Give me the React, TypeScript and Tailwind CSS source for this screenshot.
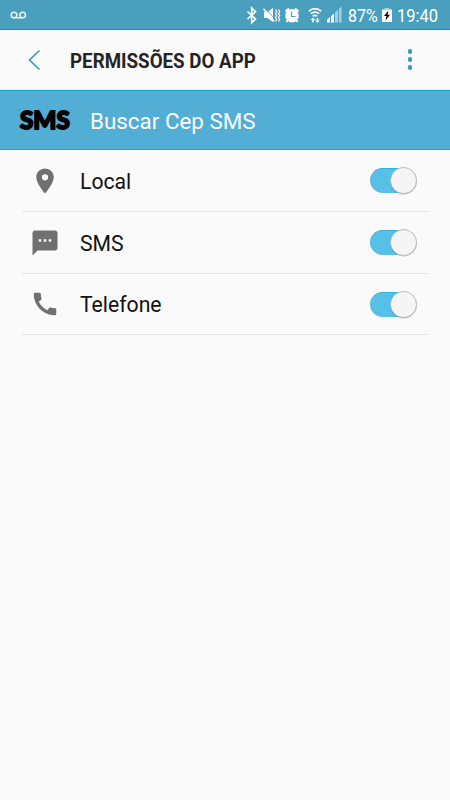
import React from 'react';

function Toggle() {
  return (
    <div role="switch" aria-checked="true" className="relative mr-[33px] mb-px h-[25px] w-[47px] shrink-0">
      <div className="h-[25px] w-[40px] rounded-full border-t border-[#2fb2dc] bg-[#57c0e6]" />
      <div className="absolute top-[-1px] right-0 size-[27px] rounded-full border border-[#bdbdbd] bg-[#f5f5f5] shadow-[0_0.5px_0.5px_rgba(0,0,0,0.25)]" />
    </div>
  );
}

function Row({ label, icon, height }: { label: string; icon: React.ReactNode; height: string }) {
  return (
    <div className={'relative flex items-center ' + height}>
      <div className="ml-[29px] flex w-8 justify-center pb-px">{icon}</div>
      <span className="ml-[19px] flex-1 pt-px text-[21.5px] leading-none text-[#111]">
        <span className="inline-block origin-left scale-x-[0.985]">{label}</span>
      </span>
      <Toggle />
      <div className="absolute right-[22px] bottom-0 left-[22px] h-px bg-[#e4e4e4]" />
    </div>
  );
}

function StatusBar() {
  return (
    <div className="flex h-[30px] items-center border-b border-[#2087ad] bg-[#4a9fbe] text-white">
      <svg className="ml-[10px]" width="17" height="8" viewBox="0 0 17 8" fill="none" stroke="#e9f5f9" strokeWidth="1.5">
        <circle cx="4" cy="4" r="2.8" />
        <circle cx="12.7" cy="4" r="2.8" />
        <path d="M4 6.8h8.7" />
      </svg>
      <svg className="ml-auto shrink-0" width="98" height="29" viewBox="245 0 98 29" fill="none" stroke="white">
        <path d="M247.5 11.5l8 7.5-3.8 3.7V8.1l3.8 3.6-8 7.5" strokeWidth="1.7" />
        <path d="M264 12h3.3l5.7-4v14l-5.7-4H264z" fill="white" stroke="none" />
        <path d="M265 8l8.5 9.5" stroke="#4a9fbe" strokeWidth="0.8" />
        <path d="M263.5 8.7l10.5 12.5" strokeWidth="1.6" />
        <path d="M275.5 9.5l1.2 2-1.2 2 1.2 2-1.2 2 1.2 2-1.2 2M278.5 9.5l1.2 2-1.2 2 1.2 2-1.2 2 1.2 2-1.2 2" strokeWidth="1.2" />
        <circle cx="292" cy="15.8" r="6.8" fill="white" stroke="none" />
        <path d="M285.5 11.5l3.5-3M298.5 11.5l-3.5-3M287.7 20.3l-1.3 1.5M296.3 20.3l1.3 1.5" strokeWidth="2" />
        <path d="M291.5 11.5v5h4" stroke="#4a9fbe" strokeWidth="1.2" />
        <path d="M308.8 11.1q6.2-5 12.4 0M310.8 13.7q4.2-3.2 8.4 0M312.8 16.1q2.2-1.5 4.4 0" strokeWidth="1.6" />
        <path d="M313 17.6l2.5 2.3h-1.7v2.4h-1.6v-2.4h-1.7zM317.5 22.7l-2.5-2.3h1.7V18h1.6v2.4h1.7z" fill="white" stroke="none" />
        <path d="M327 22.5v-2.8l3-2.7v5.5zM331 22.5v-6.3l3-2.8v9.1z" fill="white" stroke="none" />
        <path d="M335 22.5v-10l3-2.8v12.8zM339 22.5V8.8l2.5-2.3v16z" fill="#a5cfde" stroke="none" />
      </svg>
      <div className="ml-[5px] w-[31px] pt-px text-[19px] leading-none">
        <span className="inline-block origin-left scale-x-[0.84]">87%</span>
      </div>
      <svg className="ml-[3px] shrink-0" width="10" height="16" viewBox="0 0 10 16">
        <path d="M2.7 1h4.6v1.5H2.7z" fill="#a5cfde" />
        <path d="M0 2.5h10V15H0z" fill="white" />
        <path d="M6.5 3.5L2 9h2.5l-1 4.5L8 7.7H5.5z" fill="black" />
      </svg>
      <div className="mr-[11px] ml-[5px] w-[42px] pt-px text-[19px] leading-none">
        <span className="inline-block origin-left scale-x-[0.865]">19:40</span>
      </div>
    </div>
  );
}

export default function App() {
  return (
    <div className="h-[800px] w-[450px] overflow-hidden bg-[#fafafa] font-[Roboto,sans-serif] whitespace-nowrap">
      <StatusBar />
      <header className="flex h-[60px] items-center border-b border-[#e9e6e5]">
        <svg className="ml-[27px]" width="14" height="22" viewBox="0 0 14 22" fill="none" stroke="#3298bd" strokeWidth="1.6">
          <path d="M12.5 1.5L2.5 11l10 9.5" />
        </svg>
        <h1 className="ml-[29px] flex-1 pt-[3px] text-[21px] leading-none font-bold text-[#242424]">
          <span className="inline-block origin-left scale-x-[0.893]">PERMISSÕES DO APP</span>
        </h1>
        <div className="mr-[38px] flex flex-col gap-[3.5px]">
          <div className="size-[4.5px] rounded-full bg-[#3298bd]" />
          <div className="size-[4.5px] rounded-full bg-[#3298bd]" />
          <div className="size-[4.5px] rounded-full bg-[#3298bd]" />
        </div>
      </header>
      <section className="flex h-[60px] items-center border-y border-[#16a6d2] bg-[#52aed5]">
        <div className="ml-[20px] w-[70px] pb-px font-[Lato,sans-serif] text-[25.5px] leading-none font-black text-black [-webkit-text-stroke:1.9px_black]">
          <span className="inline-block origin-left scale-x-[0.95]">SMS</span>
        </div>
        <span className="pt-[3px] text-[22.5px] leading-none text-white">
          <span className="inline-block origin-left scale-x-[0.995]">Buscar Cep SMS</span>
        </span>
      </section>
      <main>
        <Row
          height="h-[62px]"
          label="Local"
          icon={
            <svg width="30" height="30" viewBox="0 0 24 24" fill="#707070">
              <path d="M12 2C8.13 2 5 5.13 5 9c0 5.25 7 13 7 13s7-7.75 7-13c0-3.87-3.13-7-7-7zm0 9.5a2.5 2.5 0 0 1 0-5 2.5 2.5 0 0 1 0 5z" />
            </svg>
          }
        />
        <Row
          height="h-[62px]"
          label="SMS"
          icon={
            <svg width="30" height="30" viewBox="0 0 24 24" fill="#707070">
              <path d="M20 2H4c-1.1 0-1.99.9-1.99 2L2 22l4-4h14c1.1 0 2-.9 2-2V4c0-1.1-.9-2-2-2zM9 11H7V9h2v2zm4 0h-2V9h2v2zm4 0h-2V9h2v2z" />
            </svg>
          }
        />
        <Row
          height="h-[61px]"
          label="Telefone"
          icon={
            <svg width="30" height="30" viewBox="0 0 24 24" fill="#707070">
              <path d="M20.01 15.38c-1.23 0-2.42-.2-3.53-.56a.977.977 0 0 0-1.01.24l-1.57 1.97c-2.83-1.35-5.48-3.9-6.89-6.83l1.95-1.66c.27-.28.35-.67.24-1.02-.37-1.11-.56-2.3-.56-3.53 0-.54-.45-.99-.99-.99H4.19C3.65 3 3 3.24 3 3.99 3 13.28 10.73 21 20.01 21c.71 0 .99-.63.99-1.18v-3.45c0-.54-.45-.99-.99-.99z" />
            </svg>
          }
        />
      </main>
    </div>
  );
}
